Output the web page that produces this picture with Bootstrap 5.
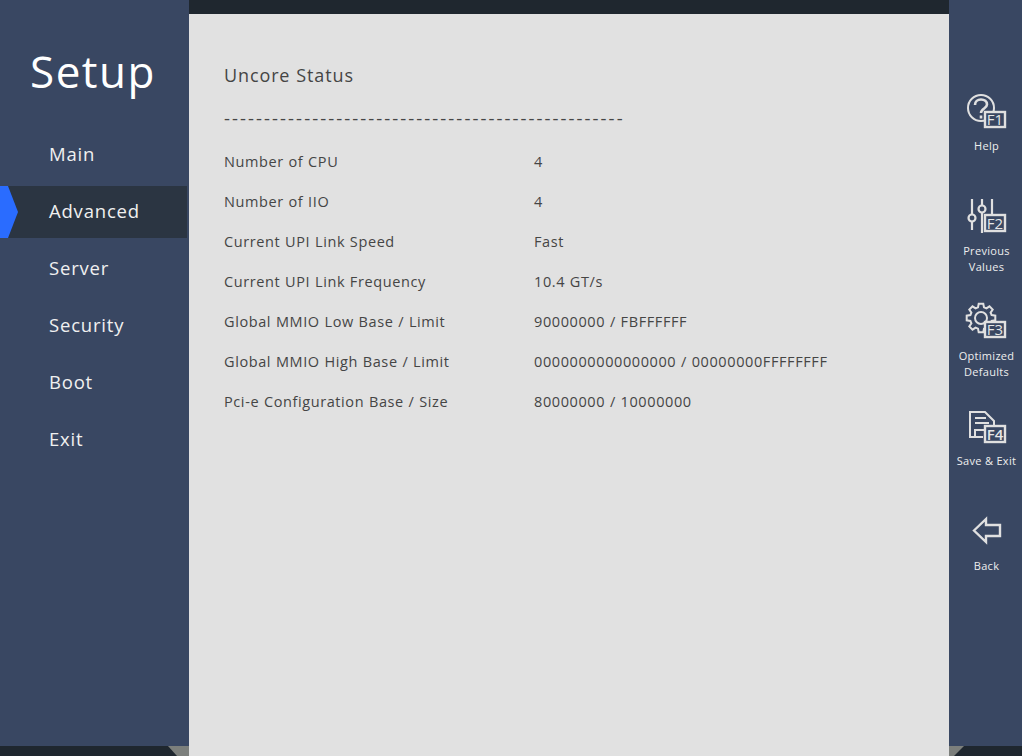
<!DOCTYPE html>
<html lang="en">
<head>
    <meta charset="UTF-8">
    <meta name="viewport" content="width=device-width, initial-scale=1.0">
    <title>Setup</title>
    <link href="https://cdn.jsdelivr.net/npm/bootstrap@5.3.0/dist/css/bootstrap.min.css" rel="stylesheet">
    <style>
        html, body { height: 100%; overflow: hidden; }
        body { background: #1f272f; font-family: "Open Sans", "Noto Sans", sans-serif; }
        .bios-shell { height: 756px; width: 1022px; }
        .side-left, .side-right { background: #394762; height: 746px; flex: none; color: #f2f2f2; }
        .side-left { width: 189px; }
        .side-right { width: 73px; padding-top: 94px; padding-left: 2px; }
        .brand-title { font-size: 44px; line-height: 60px; letter-spacing: 1.5px; color: #fff; padding: 41px 0 0 30px; height: 129px; }
        .nav-entry { height: 52px; margin-bottom: 5px; padding-left: 49px; font-size: 18.5px; letter-spacing: .8px; line-height: 50px; color: #f0f0f0; position: relative; margin-right: 2px; }
        .nav-entry.is-active { background: #2b3542; }
        .nav-entry.is-active::before { content: ""; position: absolute; left: 0; top: 0; width: 18px; height: 52px; background: #2a6cff; clip-path: polygon(0 0, 8px 0, 18px 50%, 8px 100%, 0 100%); }
        .main-pane { width: 760px; flex: none; height: 756px; }
        .top-strip { height: 14px; background: #1f272f; }
        .content-pane { background: #e1e1e1; height: 742px; padding: 46px 0 0 35px; color: #454545; letter-spacing: .6px; word-spacing: .4px; font-size: 14.5px; }
        .pane-title { font-size: 18px; line-height: 30px; letter-spacing: .88px; margin-bottom: 13px; }
        .pane-rule { line-height: 30px; height: 30px; margin-bottom: 9px; white-space: nowrap; font-size: 18.5px; letter-spacing: 2.06px; }
        .info-row { height: 40px; line-height: 40px; }
        .info-label { width: 310px; flex: none; }
        .fn-item { height: 105px; text-align: center; font-size: 11px; line-height: 16px; letter-spacing: .3px; color: #eee; }
        .fn-item svg { display: block; width: 40px; height: 40px; margin: 0 0 4px 15px; overflow: visible; }
        .fn-key { font-size: 15px; letter-spacing: 0; }
        .corner-l, .corner-r { position: absolute; top: 746px; width: 21px; height: 10px; background: #7c7f7c; }
        .corner-l { left: 168px; clip-path: polygon(0 0, 100% 0, 100% 100%, 9px 100%); }
        .corner-r { left: 949px; clip-path: polygon(0 0, 15px 0, 5px 100%, 0 100%); }
    </style>
</head>
<body>
    <div class="bios-shell d-flex position-relative">
        <div class="side-left">
            <div class="brand-title">Setup</div>
            <div class="nav-entry">Main</div>
            <div class="nav-entry is-active">Advanced</div>
            <div class="nav-entry">Server</div>
            <div class="nav-entry">Security</div>
            <div class="nav-entry">Boot</div>
            <div class="nav-entry">Exit</div>
        </div>

        <div class="main-pane">
            <div class="top-strip"></div>
            <div class="content-pane">
                <div class="pane-title">Uncore Status</div>
                <div class="pane-rule">--------------------------------------------------</div>
                <div class="info-row d-flex"><div class="info-label">Number of CPU</div><div>4</div></div>
                <div class="info-row d-flex"><div class="info-label">Number of IIO</div><div>4</div></div>
                <div class="info-row d-flex"><div class="info-label">Current UPI Link Speed</div><div>Fast</div></div>
                <div class="info-row d-flex"><div class="info-label">Current UPI Link Frequency</div><div>10.4 GT/s</div></div>
                <div class="info-row d-flex"><div class="info-label">Global MMIO Low Base / Limit</div><div>90000000 / FBFFFFFF</div></div>
                <div class="info-row d-flex"><div class="info-label">Global MMIO High Base / Limit</div><div>0000000000000000 / 00000000FFFFFFFF</div></div>
                <div class="info-row d-flex"><div class="info-label">Pci-e Configuration Base / Size</div><div>80000000 / 10000000</div></div>
            </div>
        </div>

        <div class="side-right">
            <div class="fn-item">
                <svg viewBox="0 0 40 40" fill="none" stroke="#e0e0e0" stroke-width="2">
                    <circle cx="15" cy="14" r="13"/>
                    <path d="M9 11c0-3.400 2.500-5.500 6-5.500s6 2 6 5c0 4-6 4-6 8.500" stroke-width="2.600"/>
                    <path d="M15 21.500v3" stroke-width="2.600"/>
                    <rect x="19" y="18" width="20" height="15" fill="#394762" stroke-width="2.400"/>
                    <text x="29" y="31" text-anchor="middle" class="fn-key" fill="#e6e6e6" stroke="none">F1</text>
                </svg>
                Help
            </div>
            <div class="fn-item">
                <svg viewBox="0 0 40 40" fill="none" stroke="#e0e0e0" stroke-width="2.200">
                    <path d="M6 0v15M6 23v8M16 0v6M16 14v20M26 0v15"/>
                    <circle cx="6" cy="19" r="3.500"/>
                    <circle cx="16" cy="10" r="3.500"/>
                    <rect x="19" y="16" width="20" height="16" fill="#394762" stroke-width="2.400"/>
                    <text x="29" y="29.500" text-anchor="middle" class="fn-key" fill="#e6e6e6" stroke="none">F2</text>
                </svg>
                Previous<br>Values
            </div>
            <div class="fn-item">
                <svg viewBox="0 0 40 40" fill="none" stroke="#e0e0e0" stroke-width="2">
                    <path transform="translate(15 14)" d="M10.600-3 14.300-2.300V2.300L10.600 3 9.600 5.400 11.700 8.500 8.500 11.700 5.400 9.600 3 10.600 2.300 14.300H-2.300L-3 10.600-5.400 9.600-8.500 11.700-11.700 8.500-9.600 5.400-10.600 3-14.300 2.300V-2.300L-10.600-3-9.600-5.400-11.700-8.500-8.500-11.700-5.400-9.600-3-10.600-2.300-14.300H2.300L3-10.600 5.400-9.600 8.500-11.700 11.700-8.500 9.600-5.400z"/>
                    <circle cx="15" cy="14" r="6"/>
                    <rect x="19" y="18" width="20" height="15" fill="#394762" stroke-width="2.400"/>
                    <text x="29" y="31" text-anchor="middle" class="fn-key" fill="#e6e6e6" stroke="none">F3</text>
                </svg>
                Optimized<br>Defaults
            </div>
            <div class="fn-item">
                <svg viewBox="0 0 40 40" fill="none" stroke="#e0e0e0" stroke-width="2">
                    <path d="M17 28H4V3h15l9 9v5"/>
                    <path d="M9 9h11M9 14h14M9 28v-7h11"/>
                    <rect x="19" y="17" width="20" height="16" fill="#394762" stroke-width="2.400"/>
                    <text x="29" y="30.500" text-anchor="middle" class="fn-key" fill="#e6e6e6" stroke="none" font-weight="600">F4</text>
                </svg>
                Save &amp; Exit
            </div>
            <div class="fn-item">
                <svg viewBox="0 0 40 40" fill="none" stroke="#e0e0e0" stroke-width="2.400">
                    <path d="M8 16.500 20 5v6h14v11H20v6z"/>
                </svg>
                Back
            </div>
        </div>
        <div class="corner-l"></div>
        <div class="corner-r"></div>
    </div>
    <script src="https://cdn.jsdelivr.net/npm/bootstrap@5.3.0/dist/js/bootstrap.bundle.min.js"></script>
</body>
</html>
